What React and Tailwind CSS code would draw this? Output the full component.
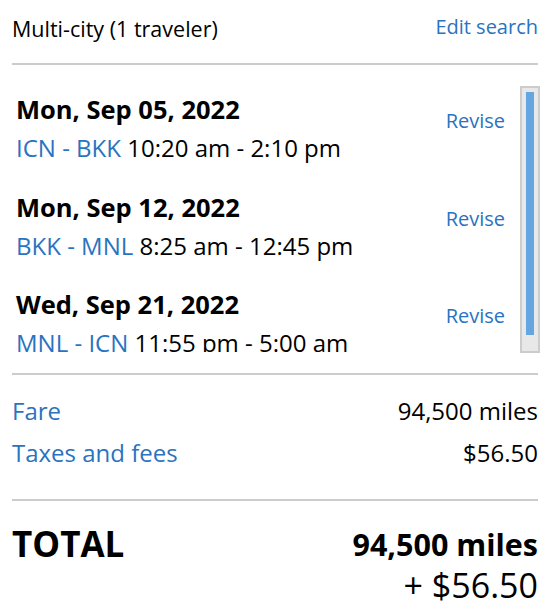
import React from 'react';

const segments = [
    { id: 1, date: 'Mon, Sep 05, 2022', route: 'ICN - BKK', time: '10:20 am - 2:10 pm' },
    { id: 2, date: 'Mon, Sep 12, 2022', route: 'BKK - MNL', time: '8:25 am - 12:45 pm' },
    { id: 3, date: 'Wed, Sep 21, 2022', route: 'MNL - ICN', time: '11:55 pm - 5:00 am' },
];

const App = () => {
    return (
        <div className="w-[550px] h-[614px] overflow-hidden bg-white px-3 text-black font-['Open_Sans',sans-serif]">
            {/* Header */}
            <div className="flex justify-between items-start h-[65px] border-b-2 border-[#cccccc]">
                <span className="text-[21.5px] leading-[28px] mt-[15px]">Multi-city (1 traveler)</span>
                <a className="text-[20px] leading-[28px] mt-[13px] text-[#2a73c0]">Edit search</a>
            </div>

            {/* Segments */}
            <div className="flex items-start pt-[21px] pb-[20px] border-b-2 border-[#cccccc]">
                <div className="flex-1 h-[266px] overflow-hidden pl-1 pr-[15px] pt-[6px]">
                    {segments.map((s) => (
                        <div key={s.id} className="flex justify-between items-start h-[97.5px]">
                            <div>
                                <div className="text-[25.5px] font-bold leading-[34px]">{s.date}</div>
                                <div className="text-[24px] leading-[34px] mt-[5px] whitespace-nowrap">
                                    <span className="text-[#2a73c0]">{s.route}</span> {s.time}
                                </div>
                            </div>
                            <a className="text-[20px] leading-[28px] mt-[15px] text-[#2a73c0]">Revise</a>
                        </div>
                    ))}
                </div>
                <div className="w-[20px] h-[267px] -mr-[2px] bg-[#e8e8e8] border-2 border-[#cccccc] px-[4px] pt-[4px]">
                    <div className="w-full h-[243px] bg-[#63a6e2]"></div>
                </div>
            </div>

            {/* Fare breakdown */}
            <div className="pt-[15px] pb-[25px] border-b-2 border-[#cccccc] text-[24px]">
                <div className="flex justify-between leading-[42px]">
                    <span className="text-[#2a73c0]">Fare</span>
                    <span>94,500 miles</span>
                </div>
                <div className="flex justify-between leading-[42px]">
                    <span className="text-[#2a73c0]">Taxes and fees</span>
                    <span>$56.50</span>
                </div>
            </div>

            {/* Total */}
            <div className="flex justify-between items-start pt-[23px]">
                <span className="text-[35px] font-bold leading-[40px]">TOTAL</span>
                <div className="text-right">
                    <div className="text-[30.5px] font-bold leading-[40px]">94,500 miles</div>
                    <div className="text-[34px] leading-[42px]">+ $56.50</div>
                </div>
            </div>
        </div>
    );
};

export default App;
